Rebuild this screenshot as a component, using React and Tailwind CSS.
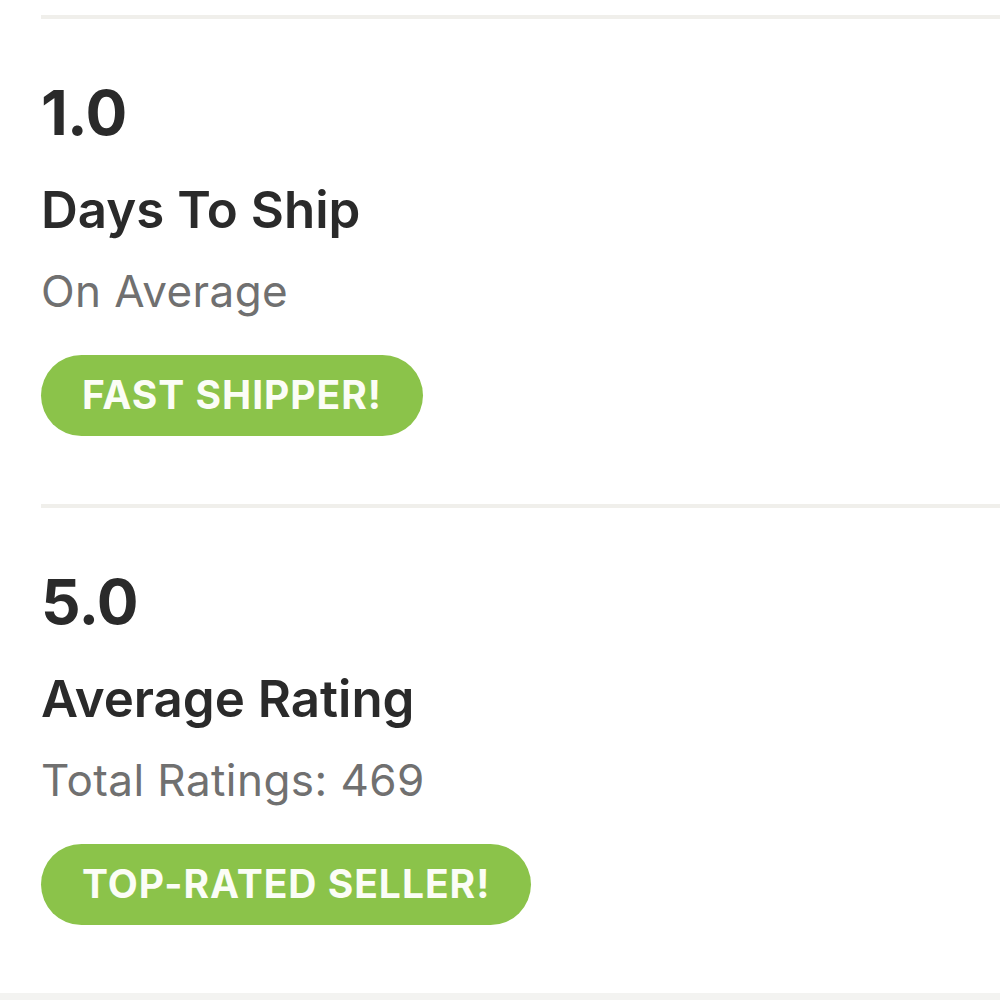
export default function App() {
  const sections = [
    {
      value: "1.0",
      title: "Days To Ship",
      detail: "On Average",
      badge: "FAST SHIPPER!",
    },
    {
      value: "5.0",
      title: "Average Rating",
      detail: "Total Ratings: 469",
      badge: "TOP-RATED SELLER!",
    },
  ];

  return (
    <div
      className="w-[1000px] h-[1000px] bg-white overflow-hidden flex flex-col"
      style={{ fontFamily: "Inter, Lato, sans-serif" }}
    >
      <div className="pl-[41px] pt-[15px]">
        {sections.map((s) => (
          <section key={s.title}>
            <div className="h-[4px] bg-[#f0efeb]" />
            <div className="pt-[63px] pb-[68px]">
              <div className="text-[62px] leading-none font-bold text-[#2a2a2a] tracking-[-0.01em]">
                {s.value}
              </div>
              <div className="mt-[40px] text-[51px] leading-none font-semibold text-[#2a2a2a]">
                {s.title}
              </div>
              <div className="mt-[34px] text-[44px] leading-none text-[#707070] tracking-[0.01em]">
                {s.detail}
              </div>
              <div className="mt-[42px] inline-flex items-center h-[81px] px-[41px] rounded-full bg-[#8bc34a] text-[#fbfdf6] text-[39px] font-bold tracking-[0.025em]">
                {s.badge}
              </div>
            </div>
          </section>
        ))}
      </div>
      <div className="flex-1 bg-[#f3f3f1]" />
    </div>
  );
}
